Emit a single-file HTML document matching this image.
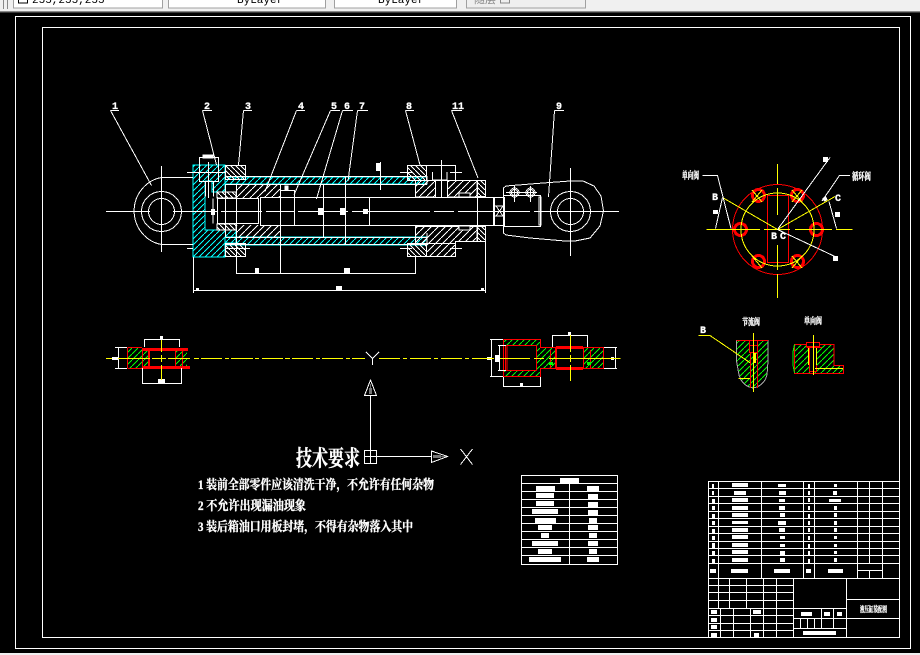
<!DOCTYPE html>
<html lang="zh">
<head>
<meta charset="utf-8">
<title>CAD</title>
<style>
html,body{margin:0;padding:0;background:#000;width:920px;height:655px;overflow:hidden}
svg{display:block;position:absolute;left:0;top:0}
text{fill:#fff}
.l{font-family:"Liberation Mono",monospace;font-weight:bold;font-size:10px;stroke:#fff;stroke-width:.3px}
.c{font-family:"Liberation Serif","Noto Serif CJK SC",serif;font-weight:bold;stroke:#fff;stroke-width:.35px}
.t{font-family:"Liberation Mono",monospace;font-size:11px;fill:#000}
</style>
</head>
<body>
<svg width="920" height="655" viewBox="0 0 920 655" xmlns="http://www.w3.org/2000/svg" shape-rendering="crispEdges" fill="none" stroke-width="1">
<defs>
<pattern id="hc" width="6" height="6" patternUnits="userSpaceOnUse"><path d="M0 6L6 0" stroke="#00ffff"/></pattern>
<pattern id="hw" width="7" height="7" patternUnits="userSpaceOnUse"><path d="M0 7L7 0" stroke="#fff"/></pattern>
<pattern id="hb" width="5" height="5" patternUnits="userSpaceOnUse"><path d="M0 0L5 5" stroke="#fff"/></pattern>
<pattern id="hg" width="6" height="6" patternUnits="userSpaceOnUse"><path d="M0 6L6 0" stroke="#00ff00"/></pattern>
</defs>
<rect width="920" height="655" fill="#000"/>

<!-- toolbar -->
<rect width="920" height="11" fill="#f0f0f0"/>
<rect y="11" width="920" height="1" fill="#8a8a8a"/>
<rect y="12" width="920" height="1" fill="#3a3a3a"/>
<path d="M3.500 0V9M7.500 0V9" stroke="#888"/>
<g fill="#fff" stroke="#a0a0a0">
<rect x="13.500" y="-3" width="149" height="11"/>
<rect x="168.500" y="-3" width="157" height="11"/>
<rect x="334.500" y="-3" width="122" height="11"/>
</g>
<rect x="466.500" y="-3" width="119" height="11" fill="#efefef" stroke="#a0a0a0"/>
<rect x="18.500" y="-3" width="9" height="6" fill="#fff" stroke="#000"/>
<text class="t" x="32" y="3">255,255,255</text>
<text class="t" x="237" y="3">ByLayer</text>
<text class="t" x="378" y="3">ByLayer</text>
<text x="474" y="3" style="font-family:'Noto Sans CJK SC',sans-serif;font-size:11px;fill:#888">随层</text>
<rect x="500.500" y="-3" width="9" height="6" stroke="#888"/>
<rect y="653" width="920" height="2" fill="#f0f0f0"/>

<!-- frames -->
<rect x="15.500" y="16.500" width="895" height="632" stroke="#fff"/>
<rect x="42.500" y="27.500" width="857" height="610" stroke="#fff"/>

<!-- hatches main -->
<path d="M193 165H225V192H212V181H205V230H236V243H225V257H193Z" fill="url(#hc)" stroke="#00ffff"/>
<rect x="225" y="177" width="202" height="7" fill="url(#hc)" stroke="#00ffff"/>
<rect x="225" y="237" width="202" height="8" fill="url(#hc)" stroke="#00ffff"/>
<rect x="225.500" y="165.500" width="20" height="14" fill="url(#hb)" stroke="#fff"/>
<rect x="225.500" y="243.500" width="20" height="13" fill="url(#hb)" stroke="#fff"/>
<rect x="236" y="184" width="44" height="14" fill="url(#hw)"/>
<rect x="236" y="225" width="44" height="12" fill="url(#hw)"/>
<rect x="217" y="192" width="19" height="6" fill="url(#hb)" stroke="#fff"/>
<rect x="217" y="224" width="19" height="6" fill="url(#hb)" stroke="#fff"/>
<rect x="407.500" y="165.500" width="19" height="15" fill="url(#hb)" stroke="#fff"/>
<rect x="426.500" y="165.500" width="29" height="15" fill="#000" stroke="#fff"/>
<path d="M415.500 180.500H435.500V197H415.500Z" fill="url(#hw)" stroke="#fff"/>
<path d="M447.500 180.500H477V197H447.500Z" fill="url(#hw)" stroke="#fff"/>
<path d="M415.500 226.500H477V241.500H455.500V243.500H415.500Z" fill="url(#hw)" stroke="#fff"/>
<rect x="407.500" y="243.500" width="19" height="13" fill="url(#hb)" stroke="#fff"/>
<rect x="426.500" y="243.500" width="29" height="13" fill="url(#hw)" stroke="#fff"/>
<rect x="477.500" y="180.500" width="8" height="16" fill="url(#hb)" stroke="#fff"/>
<rect x="477.500" y="226.500" width="8" height="15" fill="url(#hb)" stroke="#fff"/>

<!-- main linework -->
<g stroke="#fff">
<circle cx="161.500" cy="211.500" r="13"/><circle cx="161.500" cy="211.500" r="20"/>
<path d="M161.500 177.500A33 34 0 0 0 161.500 244.500H193M161.500 177.500H193"/>
<path d="M161.500 166V252M106 211.500H150M173 211.500H217M221 211.500H262M266 211.500H294M298 211.500H348M352 211.500H430M434 211.500H454M458 211.500H530M534 211.500H619"/>
<path d="M187 172.500H225M187 248.500H193M225 248.500H250M400 172.500H412M450 172.500H462M400 248.500H412M450 248.500H462"/>
<path d="M199.500 157.500H218.500V181.500H199.500ZM205.500 181.500V196.500M213.500 181.500V196.500M208.500 162V198"/>
<rect x="203" y="155" width="10" height="3" fill="#fff"/>
<rect x="217.500" y="198.500" width="41" height="25"/>
<path d="M213 198.500V223.500M260.500 197.500H294.500V225.500H260.500ZM236.500 184V237M280.500 184V273M280.500 197.500H493.500V225.500H294.500M323.500 184V237M345.500 177V244M369.500 197V225"/>
<rect x="280.500" y="190.500" width="14" height="7"/>
<rect x="285" y="186" width="3" height="4" fill="#fff"/>
<path d="M225.500 184.500V237M225.500 184.500H427M225.500 176.500H427M225.500 237.500H427M225.500 244.500H427"/>
<!-- gland details -->
<path d="M432.500 172V180H447V172M435.500 180V197M447.500 180V197M441.500 160V198M380.500 162V190"/>
<rect x="459" y="193" width="11" height="4" fill="#000" stroke="#fff"/>
<rect x="459" y="226" width="11" height="4" fill="#000" stroke="#fff"/>
<path d="M427 233V243M427 176V184M477.500 197V226"/>
<!-- rod end -->
<path d="M493.500 197.500V225.500M494.500 197.500H504.500V225.500H494.500ZM494.500 206H504.500M494.500 216H504.500M496 206L503 216M503 206L496 216"/>
<path d="M503.500 188L506 186L543 183L570 181L583 181L594 186L601 196L603.500 211L600 226L590 238L575 241L565 241L530 238L506 235L503.500 233Z"/>
<path d="M503.500 195.500H540.500V226.500H503.500"/>
<rect x="539" y="197" width="2" height="28" stroke="#fff"/>
<circle cx="570.500" cy="211.500" r="13"/><circle cx="570.500" cy="211.500" r="20"/>
<path d="M570.500 168V256M514.500 186V202M530.500 186V202"/>
<circle cx="514.500" cy="192.500" r="4.500"/><circle cx="530.500" cy="192.500" r="4.500"/><circle cx="514.500" cy="192.500" r="3"/><circle cx="530.500" cy="192.500" r="3"/>
<path d="M506 192.500H537"/>
<!-- dims -->
<path d="M236.500 237V274M236.500 273.500H415.500M415.500 257V274M193.500 257V293M193.500 290.500H485.500M485.500 240V293"/>
<!-- leaders -->
<path d="M110.500 110.500H119M110.500 110.500L151.500 185.500M202.500 110.500H212M202.500 110.500L216.500 165M243.500 110.500H252M243.500 110.500L238.500 165M296.500 110.500H305M296.500 110.500L265 191.500M330.500 110.500H340M330.500 110.500L294 195M342.500 110.500H353M342.500 110.500L316.500 199M357.500 110.500H368M357.500 110.500L348 181M405.500 110.500H414M405.500 110.500L420 165M451.500 110.500H462M451.500 110.500L478 178M554.500 110.500H564M554.500 110.500L548.500 197"/>
</g>
<g fill="#fff">
<rect x="211" y="209" width="4" height="6"/><rect x="318" y="208" width="5" height="7"/><rect x="340" y="208" width="5" height="7"/><rect x="363" y="209" width="5" height="5"/>
<rect x="376" y="163" width="5" height="8"/>
<rect x="255" y="268" width="4" height="5"/><rect x="344" y="268" width="6" height="5"/><rect x="336" y="286" width="6" height="5"/>
<rect x="196" y="288" width="3" height="2"/><rect x="481" y="288" width="3" height="2"/>
</g>
<g>
<text class="l" x="112" y="109">1</text><text class="l" x="204" y="109">2</text><text class="l" x="245" y="109">3</text><text class="l" x="298" y="109">4</text><text class="l" x="331" y="109">5</text><text class="l" x="344" y="109">6</text><text class="l" x="359" y="109">7</text><text class="l" x="406" y="109">8</text><text class="l" x="452" y="109">11</text><text class="l" x="556" y="109">9</text>
</g>

<!-- circle view -->
<g stroke="#ff0000">
<circle cx="777.500" cy="229.500" r="45"/>
<rect x="767.500" y="195.500" width="21" height="67"/>
<g id="h">
<circle cx="740.500" cy="229.500" r="7"/><circle cx="740.500" cy="229.500" r="6"/><circle cx="740.500" cy="229.500" r="5"/>
<circle cx="816.500" cy="229.500" r="7"/><circle cx="816.500" cy="229.500" r="6"/><circle cx="816.500" cy="229.500" r="5"/>
<circle cx="758.500" cy="195.500" r="7"/><circle cx="758.500" cy="195.500" r="6"/><circle cx="758.500" cy="195.500" r="5"/>
<circle cx="797.500" cy="195.500" r="7"/><circle cx="797.500" cy="195.500" r="6"/><circle cx="797.500" cy="195.500" r="5"/>
<circle cx="758.500" cy="261.500" r="7"/><circle cx="758.500" cy="261.500" r="6"/><circle cx="758.500" cy="261.500" r="5"/>
<circle cx="797.500" cy="261.500" r="7"/><circle cx="797.500" cy="261.500" r="6"/><circle cx="797.500" cy="261.500" r="5"/>
</g>
</g>
<g stroke="#ffff00">
<circle cx="777.500" cy="229.500" r="36.500"/>
<path d="M706.500 229.500H760M764 229.500H790M795 229.500H832M836 229.500H852.500M777.500 164V184M777.500 188V215M777.500 245V270M777.500 274V298"/>
<path d="M722.500 197.500L777.500 229.500L835 196.500M752 190L762 202M762 190L752 202M792 190L802 202M802 190L792 202M752 256L762 268M792 256L802 268M802 256L792 268"/>
</g>
<g stroke="#fff">
<path d="M702.500 175.500H717.500L731 228.500M722.500 197.500L715.500 228.500M777.500 229.500L830 157.500M777.500 229.500L835 256.500M850 175.500H839.500L822 201M829 201.500L836.500 228.500"/>
</g>
<g fill="#fff">
<rect x="713" y="210" width="5" height="4"/><rect x="835" y="212" width="5" height="5"/><rect x="823" y="157" width="5" height="5"/><rect x="833" y="256" width="5" height="5"/>
<rect x="823" y="197" width="4" height="4" transform="rotate(-30 825 199)"/>
</g>
<text class="c" x="682" y="179" font-size="10" textLength="17" lengthAdjust="spacingAndGlyphs">单向阀</text>
<text class="c" x="852" y="180" font-size="10" textLength="19" lengthAdjust="spacingAndGlyphs">循环阀</text>
<text class="l" x="712" y="200">B</text>
<text class="l" x="835" y="201">C</text>
<text class="l" x="771" y="239">B</text>
<text class="l" x="780" y="239">C</text>

<!-- detail views -->
<path d="M736.500 340.500H768V361L767 375Q764 386 753 388Q742 386 739 375L736.500 361Z" fill="url(#hg)" stroke="#aaa"/>
<path d="M736.500 340.500H768" stroke="#ff0000"/>
<g stroke="#ff0000"><rect x="749.500" y="340.500" width="8" height="12" fill="#000"/><path d="M749.500 345.500H757.500M750.500 353V360M757.500 353V388M750.500 360V388"/></g>
<path d="M753.500 333V392M698.500 335.500H710L750 362.700M738.500 378.500H750" stroke="#ffff00"/>
<rect x="754" y="353" width="2" height="10" fill="#ffff00"/>
<path d="M794.500 344.500H834V365.500H843.500V373.500H794.500Z" fill="url(#hg)" stroke="#ff0000"/>
<path d="M794.500 344.500L793 352V365L794.500 373" stroke="#00ff00"/>
<g stroke="#ff0000"><rect x="806.500" y="342.500" width="13" height="4" fill="#000"/><rect x="809.500" y="347.500" width="7" height="24" fill="#000"/><path d="M806.500 347.500H822"/></g>
<path d="M813.500 335V375M808.500 348V365M816.500 348V365M815 368.500H843" stroke="#ffff00"/>
<text class="l" x="700" y="333">B</text>
<text class="c" x="742" y="325" font-size="9" textLength="18" lengthAdjust="spacingAndGlyphs">节流阀</text>
<text class="c" x="804" y="324" font-size="9" textLength="18" lengthAdjust="spacingAndGlyphs">单向阀</text>

<!-- left part of lower view -->
<rect x="127" y="348" width="22" height="20" fill="url(#hg)"/>
<rect x="176" y="348" width="11" height="20" fill="url(#hg)"/>
<g stroke="#ff0000">
<path d="M127.500 348V368"/>
<path d="M142 349.500H188M142 348.500H188M142 350.500H188M142 367.500H190M142 366.500H190M142 368.500H190M149.500 350V367M148.500 350V367M175.500 350V367M142.500 350V367M182.500 350V367"/>
<path d="M127.500 347.500H142M127.500 368.500H142"/>
</g>
<g stroke="#fff">
<path d="M115 347.500H127M115 368.500H127M118.500 348V368M144.500 339V347M179.500 339V347M144.500 339.500H179.500M142.500 368V384M181.500 368V384M142.500 383.500H181.500"/>
</g>
<g fill="#fff"><rect x="112" y="357" width="6" height="3"/><rect x="160" y="336" width="3" height="3"/><rect x="158" y="379" width="7" height="4"/></g>
<path d="M161.500 340V352M161.500 355V362M161.500 365V380" stroke="#ffff00"/>

<!-- right part of lower view -->
<path d="M503.500 339.500H540.500V347.500L545 349V368L540.500 370V376.500H503.500V370H536.500V345.500H503.500Z" fill="url(#hg)"/>
<rect x="545" y="348" width="11" height="20" fill="url(#hg)"/>
<rect x="583" y="348" width="20" height="20" fill="url(#hg)"/>
<g stroke="#ff0000">
<path d="M503.500 339.500H540.500V347.500H603.500V368.500H540.500V376.500H503.500V339.500M505.500 345.500H536.500M505.500 370.500H536.500M505.500 345.500V370.500M536.500 345.500V370.500M507 345V370"/>
<path d="M556 346.500H583M556 348.500H583M556 367.500H583M556 369.500H583M555.500 347V369M556.500 347V369M583.500 347V369M550.500 350V368M590.500 350V368"/>
</g>
<g stroke="#fff">
<path d="M490 339.500H503M490 376.500H503M491.500 339V377M498 345.500H506M498 370.500H506M499.500 345V370M503.500 377V387M540.500 377V387M503.500 386.500H540.500M552.500 335V347M587.500 335V347M552.500 335.500H587.500M604 347.500H617M604 368.500H617M615.500 348V368"/>
</g>
<g fill="#fff"><rect x="487" y="357" width="5" height="3"/><rect x="495" y="355" width="4" height="7"/><rect x="520" y="383" width="3" height="3"/><rect x="568" y="332" width="3" height="3"/><rect x="611" y="357" width="3" height="3"/></g>
<rect x="549" y="362" width="4" height="3" fill="#00ff00"/><rect x="587" y="362" width="4" height="3" fill="#00ff00"/>
<path d="M570.500 335V352M570.500 355V362M570.500 365V381" stroke="#ffff00"/>

<!-- axis -->
<path d="M106 358.500H112M118 358.500H150M152 358.500H166M168 358.500H190M194 358.500H199M201 358.500H222M225 358.500H229M231 358.500H253M255 358.500H259M262 358.500H283M285 358.500H290M292 358.500H313M316 358.500H320M322 358.500H343M346 358.500H350M352 358.500H365M379 358.500H400M403 358.500H407M410 358.500H431M434 358.500H438M441 358.500H462M465 358.500H469M472 358.500H494M500 358.500H530M534 358.500H544M549 358.500H620.500" stroke="#ffff00"/>
<path d="M366 352L372.500 358.500L379 352M372.500 358.500V365" stroke="#fff"/>

<!-- UCS -->
<g stroke="#fff">
<rect x="364.500" y="450.500" width="12" height="13"/>
<path d="M370.500 395V463M364.500 456.500H431.500"/>
<path d="M364.500 395.500H376.500L370.500 380Z" fill="#000"/>
<path d="M431.500 451V462.500L447.500 456.500Z" fill="#000"/>
<path d="M460.500 449L472.500 464.500M472.500 449L460.500 464.500"/>
</g>
<path d="M370.500 384V394M369.500 388V394M371.500 388V394" stroke="#777"/>
<path d="M433 456.500H445M433 455.500H441M433 457.500H441" stroke="#777"/>

<!-- text -->
<text class="c" x="296" y="466" font-size="22" textLength="64" lengthAdjust="spacingAndGlyphs">技术要求</text>
<text class="c" x="198" y="489" font-size="13" textLength="236" lengthAdjust="spacingAndGlyphs">1 装前全部零件应该清洗干净，不允许有任何杂物</text>
<text class="c" x="198" y="510" font-size="13" textLength="108" lengthAdjust="spacingAndGlyphs">2 不允许出现漏油现象</text>
<text class="c" x="198" y="531" font-size="13" textLength="215" lengthAdjust="spacingAndGlyphs">3 装后箱油口用板封堵，不得有杂物落入其中</text>

<!-- center table -->
<g stroke="#fff">
<rect x="521.500" y="475.500" width="96" height="89"/>
<path d="M521 483.500H618M521 491.500H618M521 499.500H618M521 507.500H618M521 515.500H618M521 523.500H618M521 531.500H618M521 539.500H618M521 547.500H618M521 555.500H618M569.500 483.500V564"/>
</g>
<g fill="#fff">
<rect x="560" y="478" width="19" height="5"/>
<rect x="536" y="486" width="19" height="5"/><rect x="587" y="486" width="12" height="5"/>
<rect x="536" y="493" width="18" height="5"/><rect x="588" y="494" width="10" height="5"/>
<rect x="536" y="501" width="18" height="5"/><rect x="588" y="502" width="10" height="5"/>
<rect x="532" y="509" width="26" height="5"/><rect x="588" y="510" width="10" height="5"/>
<rect x="535" y="518" width="21" height="5"/><rect x="589" y="518" width="8" height="5"/>
<rect x="538" y="525" width="14" height="5"/><rect x="588" y="525" width="10" height="5"/>
<rect x="541" y="533" width="8" height="5"/><rect x="589" y="533" width="8" height="5"/>
<rect x="532" y="541" width="26" height="5"/><rect x="588" y="541" width="10" height="5"/>
<rect x="538" y="549" width="14" height="5"/><rect x="589" y="549" width="8" height="5"/>
<rect x="529" y="557" width="32" height="5"/><rect x="587" y="557" width="12" height="5"/>
</g>

<!-- title block -->
<g stroke="#fff">
<rect x="708.500" y="481.500" width="191" height="156"/>
<path d="M708 488.500H899M708 496.500H899M708 503.500H899M708 511.500H899M708 518.500H899M708 526.500H899M708 533.500H899M708 541.500H899M708 548.500H899M708 555.500H899M708 563.500H899M708 578.500H899"/>
<path d="M718.500 481V578M761.500 481V578M803.500 481V578M814.500 481V578M857.500 481V578M869.500 481V563M882.500 481V578M857 570.500H882M869.500 570.500V578"/>
<path d="M708 585.500H793M708 592.500H793M708 600.500H793M708 608.500H793M708 615.500H793M708 623.500H793M708 630.500H793"/>
<path d="M718.500 578V608M729.500 578V608M746.500 578V608M763.500 578V637M776.500 578V637M793.500 578V637M720.500 608V637M733.500 608V637M750.500 608V637"/>
<path d="M846.500 578V637M793 608.500H846M793 618.500H846M793 628.500H846M821.500 608V618M833.500 608V628M800.500 618V628M807.500 618V628M814.500 618V628M821.500 618V628"/>
<path d="M846 599.500H899M846 618.500H899"/>
</g>
<g fill="#fff">
<rect x="712" y="484" width="2" height="4"/><rect x="732" y="483" width="16" height="4"/><rect x="778" y="484" width="8" height="3"/><rect x="808" y="484" width="2" height="4"/><rect x="834" y="484" width="3" height="3"/>
<rect x="712" y="491" width="2" height="4"/><rect x="734" y="491" width="12" height="4"/><rect x="779" y="491" width="7" height="4"/><rect x="808" y="491" width="2" height="4"/><rect x="833" y="491" width="4" height="4"/>
<rect x="712" y="499" width="3" height="4"/><rect x="732" y="498" width="16" height="4"/><rect x="779" y="499" width="6" height="3"/><rect x="808" y="498" width="2" height="4"/><rect x="829" y="499" width="12" height="3"/>
<rect x="712" y="506" width="3" height="4"/><rect x="732" y="506" width="16" height="4"/><rect x="779" y="506" width="6" height="4"/><rect x="808" y="506" width="2" height="4"/><rect x="834" y="506" width="3" height="4"/>
<rect x="712" y="514" width="3" height="4"/><rect x="732" y="513" width="16" height="4"/><rect x="780" y="513" width="5" height="4"/><rect x="808" y="514" width="2" height="4"/><rect x="834" y="513" width="3" height="4"/>
<rect x="712" y="521" width="3" height="4"/><rect x="732" y="521" width="16" height="3"/><rect x="778" y="521" width="8" height="4"/><rect x="808" y="521" width="2" height="4"/><rect x="834" y="521" width="3" height="4"/>
<rect x="712" y="529" width="3" height="4"/><rect x="732" y="528" width="16" height="4"/><rect x="779" y="528" width="6" height="4"/><rect x="808" y="528" width="2" height="4"/><rect x="834" y="528" width="3" height="4"/>
<rect x="712" y="536" width="3" height="4"/><rect x="732" y="535" width="16" height="4"/><rect x="780" y="536" width="5" height="3"/><rect x="808" y="536" width="2" height="4"/><rect x="834" y="536" width="3" height="3"/>
<rect x="712" y="543" width="3" height="5"/><rect x="732" y="543" width="16" height="4"/><rect x="780" y="544" width="5" height="3"/><rect x="808" y="544" width="2" height="4"/><rect x="834" y="544" width="3" height="3"/>
<rect x="712" y="551" width="3" height="4"/><rect x="732" y="550" width="16" height="4"/><rect x="780" y="551" width="5" height="4"/><rect x="808" y="551" width="2" height="4"/><rect x="834" y="551" width="3" height="3"/>
<rect x="712" y="559" width="3" height="4"/><rect x="732" y="558" width="16" height="4"/><rect x="780" y="558" width="5" height="4"/><rect x="808" y="559" width="2" height="4"/><rect x="834" y="558" width="3" height="4"/>
<rect x="710" y="569" width="6" height="4"/><rect x="731" y="569" width="17" height="4"/><rect x="774" y="569" width="16" height="4"/><rect x="806" y="569" width="5" height="4"/><rect x="828" y="569" width="15" height="4"/>
<rect x="711" y="610" width="6" height="4"/><rect x="753" y="610" width="8" height="4"/>
<rect x="711" y="618" width="6" height="4"/><rect x="711" y="625" width="6" height="4"/><rect x="711" y="633" width="6" height="4"/><rect x="754" y="633" width="5" height="4"/>
<rect x="801" y="612" width="11" height="4"/><rect x="824" y="612" width="6" height="4"/><rect x="837" y="612" width="5" height="4"/>
<rect x="803" y="631" width="33" height="4"/>
</g>
<text class="c" x="860" y="612" font-size="8" textLength="27" lengthAdjust="spacingAndGlyphs">液压缸装配图</text>
</svg>
</body>
</html>
